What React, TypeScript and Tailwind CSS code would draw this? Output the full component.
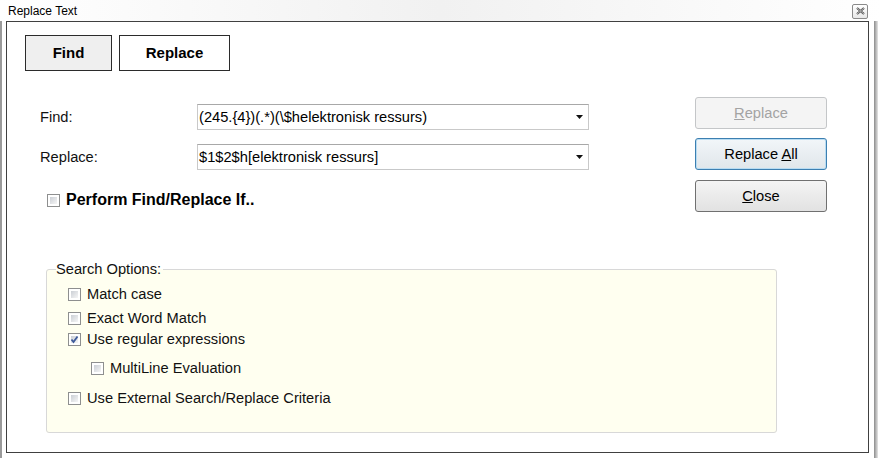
import React from "react";

const font = "font-['Liberation_Sans',Arial,sans-serif]";

function Check({ checked = false }: { checked?: boolean }) {
    return (
        <span className="relative inline-block w-[13px] h-[13px] shrink-0 border border-[#8e8f8f] bg-white p-[2px]">
            <span className="block w-full h-full bg-gradient-to-br from-[#cbcfd5] to-[#f6f6f6]" />
            {checked && (
                <svg className="absolute left-[1px] top-[1px]" width="9" height="9" viewBox="0 0 9 9">
                    <path d="M1.5 4.5 L3.5 7 L7.5 1.5" fill="none" stroke="#3d5a9a" strokeWidth="1.8" />
                </svg>
            )}
        </span>
    );
}

function Combo({ value }: { value: string }) {
    return (
        <div className="flex items-center w-[392px] h-[26px] border border-[#c9c9c9] border-t-[#a8a8a8] bg-white pl-[1px] pr-[5px]">
            <span className="flex-1 text-black leading-none">{value}</span>
            <svg width="7" height="4" viewBox="0 0 7 4">
                <path d="M0 0 H7 L3.5 4 Z" fill="#111" />
            </svg>
        </div>
    );
}

function WinButton({
    children,
    disabled = false,
    focused = false,
}: {
    children: React.ReactNode;
    disabled?: boolean;
    focused?: boolean;
}) {
    let cls = "border-[#707070] bg-gradient-to-b from-[#f4f4f4] to-[#e2e2e2] text-black";
    if (disabled) cls = "border-[#c4c6c8] bg-[#f4f4f4] text-[#a3a3a3]";
    if (focused) cls = "border-[#3c7fb1] bg-gradient-to-b from-[#f2f6f9] to-[#e0e6ea] text-black shadow-[inset_0_0_0_1px_#b8dcf2]";
    return (
        <div className={`flex items-center justify-center w-[132px] h-[32px] rounded-[3px] border ${cls}`}>
            {children}
        </div>
    );
}

function Option({ checked, label, indent = false, className = "" }: { checked?: boolean; label: string; indent?: boolean; className?: string }) {
    return (
        <div className={`flex items-center h-[20px] gap-[6px] ${indent ? "pl-[23px]" : ""} ${className}`}>
            <Check checked={checked} />
            <span>{label}</span>
        </div>
    );
}

export default function App() {
    return (
        <div className={`w-[881px] h-[458px] bg-white overflow-hidden text-[14.67px] text-[#111] ${font}`}>
            {/* title bar */}
            <div className="flex items-center h-[21px] bg-gradient-to-r from-white via-[#f1f1f1] to-white">
                <span className="ml-[8px] text-[12px] text-black leading-none">Replace Text</span>
                <div className="ml-auto mr-[13px] mt-[1px] flex items-center justify-center w-[16px] h-[15px] rounded-[2px] border border-[#8a8a8a] bg-gradient-to-b from-white to-[#e8e8e8]">
                    <svg width="9" height="8" viewBox="0 0 9 8">
                        <path d="M1 1 L8 7 M8 1 L1 7" stroke="#444" strokeWidth="2" />
                        <path d="M1 1 L8 7 M8 1 L1 7" stroke="#fff" strokeWidth="0.6" />
                    </svg>
                </div>
            </div>

            <div className="flex h-[437px]">
                <div className="w-[6px] h-full">
                    <div className="w-[2px] h-full bg-[#9a9a9a]" />
                </div>

                {/* main panel */}
                <div className="w-[863px] h-[432px] border border-[#404040] bg-white">
                    <div className="flex gap-[7px] mt-[13px] ml-[18px]">
                        <div className="flex items-center justify-center w-[87px] h-[36px] border border-[#2b2b2b] bg-[#efefef] font-bold text-[15px] text-black">
                            Find
                        </div>
                        <div className="flex items-center justify-center w-[111px] h-[36px] border border-[#2b2b2b] bg-white font-bold text-[15px] text-black">
                            Replace
                        </div>
                    </div>

                    <div className="flex items-start mt-[26px]">
                        <div className="w-[688px] pl-[33px]">
                            <div className="flex items-center mt-[7px]">
                                <span className="w-[157px]">Find:</span>
                                <Combo value="(245.{4})(.*)(\$helektronisk ressurs)" />
                            </div>
                            <div className="flex items-center mt-[14px]">
                                <span className="w-[157px]">Replace:</span>
                                <Combo value="$1$2$h[elektronisk ressurs]" />
                            </div>
                            <div className="flex items-center h-[20px] mt-[20px] ml-[7px] gap-[6px]">
                                <Check />
                                <span className="font-bold text-[16px] text-black">Perform Find/Replace If..</span>
                            </div>
                        </div>
                        <div className="flex flex-col gap-[9px]">
                            <WinButton disabled>
                                <span><span className="underline">R</span>eplace</span>
                            </WinButton>
                            <WinButton focused>
                                <span>Replace <span className="underline">A</span>ll</span>
                            </WinButton>
                            <div className="mt-[1px]">
                                <WinButton>
                                    <span><span className="underline">C</span>lose</span>
                                </WinButton>
                            </div>
                        </div>
                    </div>

                    <fieldset className="mt-[49px] ml-[39px] w-[731px] h-[172px] border border-[#d8d8d8] rounded-[3px] bg-[#fffff0]">
                        <legend className="ml-[9px] pr-[2px] leading-[16px]">Search Options:</legend>
                        <div className="pl-[21px]">
                            <Option label="Match case" className="mt-[7px]" />
                            <Option label="Exact Word Match" className="mt-[4px]" />
                            <Option checked label="Use regular expressions" className="mt-[1px]" />
                            <Option indent label="MultiLine Evaluation" className="mt-[9px]" />
                            <Option label="Use External Search/Replace Criteria" className="mt-[10px]" />
                        </div>
                    </fieldset>
                </div>

                <div className="w-[12px] h-full flex">
                    <div className="ml-[5px] w-[4px] h-full bg-gradient-to-r from-[#8c8c8c] to-[#e6e6e6]" />
                </div>
            </div>
        </div>
    );
}
